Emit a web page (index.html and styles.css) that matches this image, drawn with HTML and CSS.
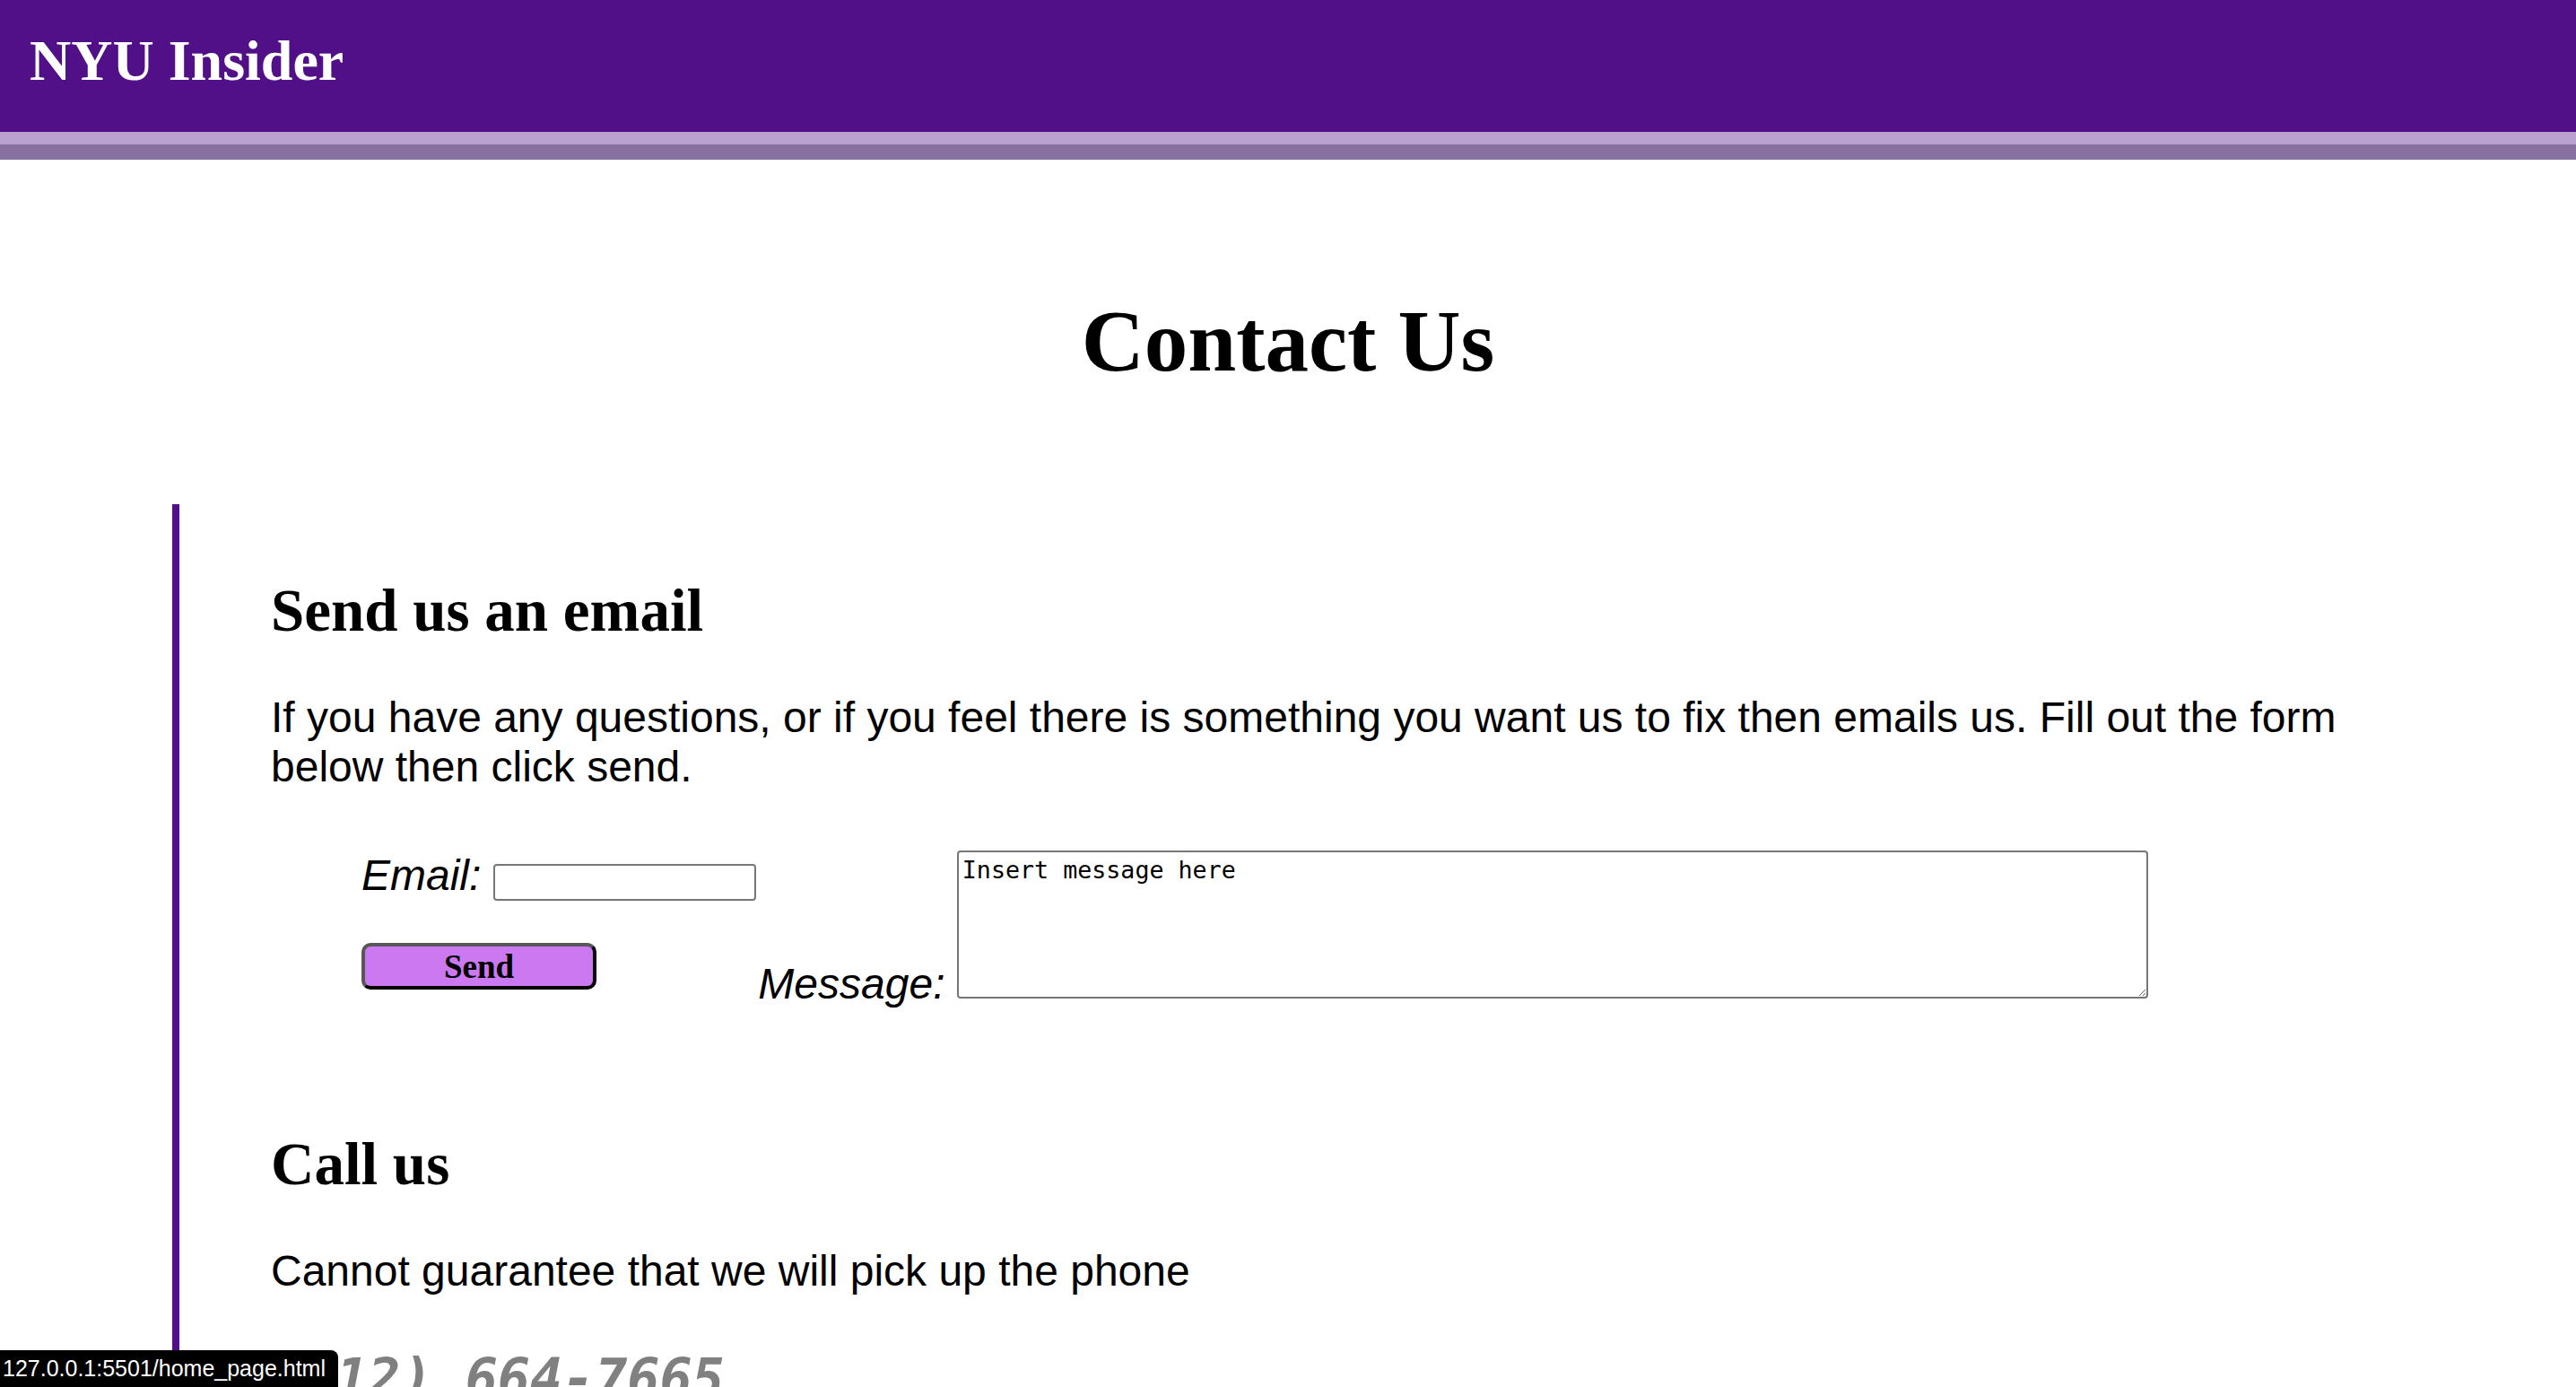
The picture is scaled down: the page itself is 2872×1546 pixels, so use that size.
FILE: index.html
```html
<!DOCTYPE html>
<html lang="en">
<head>
<meta charset="utf-8">
<title>Contact Us - NYU Insider</title>
<link rel="stylesheet" href="styles.css">
</head>
<body>
<header class="site-header">
  <div class="brand">NYU Insider</div>
</header>
<div class="stripe-light"></div>
<div class="stripe-dark"></div>

<h1 class="page-title">Contact Us</h1>

<main class="contact">
  <section class="block">
    <h2 class="block-title">Send us an email</h2>
    <p class="block-text">If you have any questions, or if you feel there is something you want us to fix then emails us. Fill out the form below then click send.</p>
    <form class="mail-form">
      <div class="left-col">
        <div class="email-row">
          <label class="field-label" for="email">Email:</label>
          <input class="email-input" id="email" type="email">
        </div>
        <button class="send-btn" type="button">Send</button>
      </div>
      <div class="right-col"><label class="field-label" for="msg">Message:</label> <textarea class="msg-input" id="msg">Insert message here</textarea></div>
    </form>
  </section>

  <section class="block call">
    <h2 class="block-title">Call us</h2>
    <p class="block-text">Cannot guarantee that we will pick up the phone</p>
    <p class="phone">(212) 664-7665</p>
  </section>
</main>

<div class="status-tip">127.0.0.1:5501/home_page.html</div>
</body>
</html>
```

FILE: styles.css
```css
html, body {
  margin: 0;
  padding: 0;
  background: #ffffff;
}

body {
  font-family: "Liberation Sans", Arial, sans-serif;
  color: #000;
  overflow: hidden;
  height: 1546px;
}

.site-header {
  background: #510f88;
  height: 147px;
  box-sizing: border-box;
  padding: 31px 33px 0;
}

.brand {
  font-family: "Liberation Serif", "Times New Roman", serif;
  font-weight: bold;
  font-size: 64px;
  color: #ffffff;
}

.stripe-light {
  height: 14px;
  background: #b9a1d0;
}

.stripe-dark {
  height: 17px;
  background: #8871a0;
}

.page-title {
  font-family: "Liberation Serif", "Times New Roman", serif;
  font-weight: bold;
  font-size: 97px;
  line-height: normal;
  text-align: center;
  margin: 147px 0 0;
}

.contact {
  margin: 126px 192px 0;
  border-left: 8px solid #510f88;
  padding: 80px 0 200px 102px;
}

.block-title {
  font-family: "Liberation Serif", "Times New Roman", serif;
  font-weight: bold;
  font-size: 67px;
  line-height: normal;
  margin: 0;
}

.block-text {
  font-size: 48px;
  line-height: normal;
  margin: 53px 0 0;
}

.mail-form {
  display: flex;
  align-items: flex-start;
  margin: 66px 0 0 101px;
}

.left-col {
  display: flex;
  flex-direction: column;
  align-items: flex-start;
}

.email-row {
  display: flex;
  align-items: baseline;
  gap: 14px;
}

.field-label {
  font-style: italic;
  font-size: 48px;
  line-height: normal;
}

.email-input {
  box-sizing: border-box;
  width: 293px;
  height: 41px;
  border: 2px solid #767676;
  border-radius: 4px;
  padding: 2px 4px;
  font-size: 26.67px;
  font-family: "Liberation Sans", Arial, sans-serif;
  background: #fff;
}

.send-btn {
  margin-top: 47px;
  box-sizing: border-box;
  width: 262px;
  height: 52px;
  background: #cb78f1;
  border-style: solid;
  border-width: 4px;
  border-color: #575757 #000 #000 #575757;
  border-radius: 10px;
  font-family: "Liberation Serif", "Times New Roman", serif;
  font-weight: bold;
  font-size: 37px;
  color: #000;
  padding: 0;
  line-height: 1;
}

.right-col {
  font-size: 48px;
  line-height: normal;
  margin-left: 2px;
}

.msg-input {
  box-sizing: border-box;
  width: 1328px;
  height: 165px;
  border: 2px solid #767676;
  border-radius: 4px;
  padding: 4px;
  font-family: "DejaVu Sans Mono", "Liberation Mono", monospace;
  font-size: 26.67px;
  line-height: 1.2;
  color: #000;
  resize: both;
  vertical-align: baseline;
}

.call {
  margin-top: 135px;
}

.phone {
  font-family: "DejaVu Sans Mono", "Liberation Mono", monospace;
  font-weight: bold;
  font-style: italic;
  font-size: 60px;
  color: #808080;
  line-height: normal;
  margin: 57px 0 0;
}

.status-tip {
  position: fixed;
  left: 0;
  bottom: 0;
  background: #000;
  color: #fff;
  font-family: "Liberation Sans", Arial, sans-serif;
  font-size: 25px;
  line-height: 41px;
  height: 41px;
  padding: 0 14px 0 3px;
  border-top-right-radius: 8px;
  white-space: nowrap;
}
```
